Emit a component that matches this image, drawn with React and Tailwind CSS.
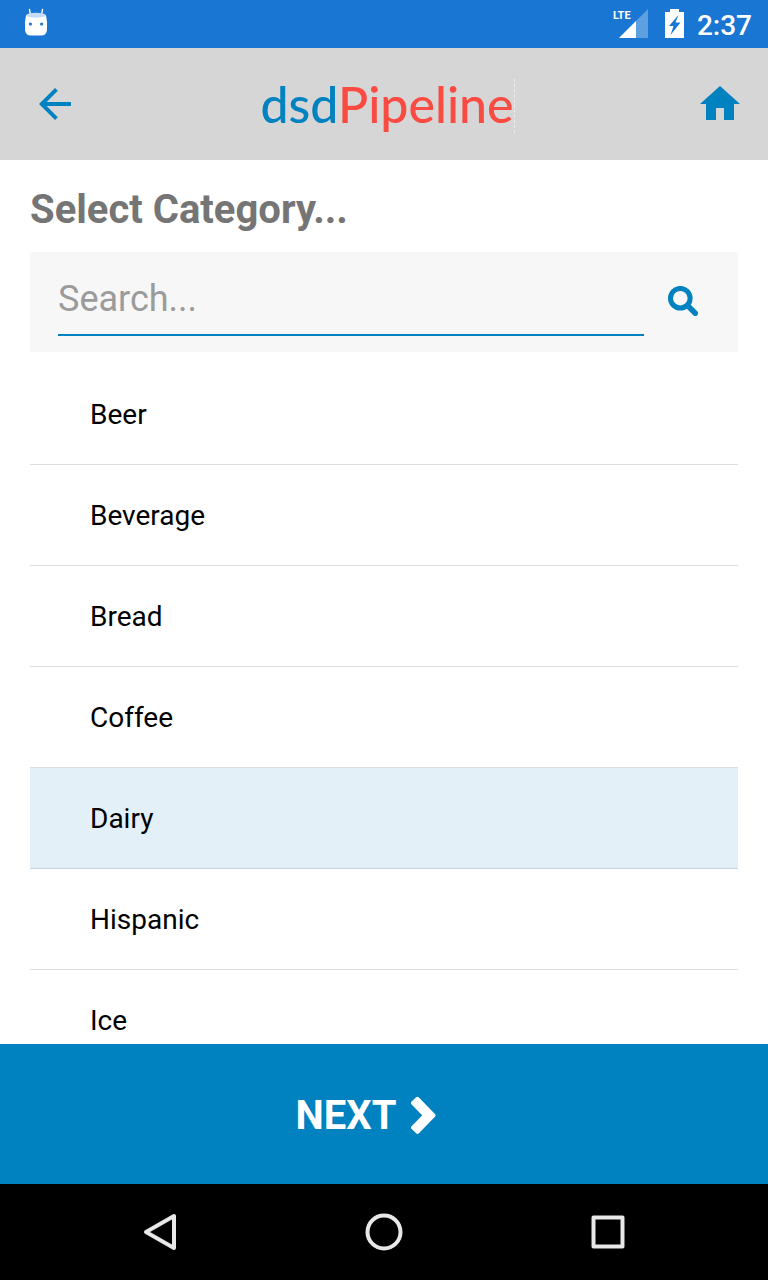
import React, { useState } from 'react';

const CATEGORIES = ['Beer', 'Beverage', 'Bread', 'Coffee', 'Dairy', 'Hispanic', 'Ice'];

function StatusBar() {
  return (
    <div className="flex h-12 shrink-0 items-center justify-between bg-[#1976d2] pl-6 pr-4 text-white">
      <svg width="24" height="32" viewBox="0 0 24 32" aria-hidden="true">
        <path d="M5.500 1.500 6.500 7M18.500 1.500 17.500 7" stroke="#fff" strokeWidth="1.400" strokeLinecap="round" />
        <path d="M2 7.500Q12 3.500 22 7.500Q23.600 14 23 22Q22.500 27.500 17 27.500H7Q1.500 27.500 1 22Q.4 14 2 7.500z" fill="#fff" />
        <ellipse cx="12" cy="7.200" rx="9.800" ry="2.500" fill="#c4dcf5" />
        <circle cx="6.400" cy="16" r="1.600" fill="#1976d2" />
        <circle cx="17.600" cy="16" r="1.600" fill="#1976d2" />
      </svg>
      <div className="flex items-center">
        <div className="mr-4 flex h-8 w-9 items-start">
          <span className="w-[18px] text-[11px] font-bold leading-4">LTE</span>
          <svg className="-ml-3 shrink-0" width="30" height="30" viewBox="0 0 30 30" aria-hidden="true">
            <path d="M29 1V30H0z" fill="#fff" fillOpacity=".3" />
            <path d="M17 13V30H0z" fill="#fff" />
          </svg>
        </div>
        <svg className="mr-3" width="20" height="30" viewBox="0 0 20 30" aria-hidden="true">
          <path d="M5 0H14V3H19V29H0V3H5z" fill="#fff" />
          <path d="M13.500 6 4 17H8.500L5.500 26 15.500 13.500H10.500z" fill="#1976d2" />
        </svg>
        <span className="pt-1 text-[28px] font-medium leading-8">2:37</span>
      </div>
    </div>
  );
}

function Header() {
  return (
    <header className="flex h-28 shrink-0 items-center justify-between bg-[#d6d6d6] pl-[31px] pr-6 text-[#0081c0]">
      <button type="button" aria-label="Back">
        <svg width="48" height="48" viewBox="0 0 24 24" fill="currentColor">
          <path d="M20 11H7.830l5.590-5.590L12 4l-8 8 8 8 1.410-1.410L7.830 13H20z" />
        </svg>
      </button>
      <div className="mt-1 border-r border-dashed border-[#eeeeee] pb-1 font-['Lato',sans-serif] text-[50px] font-medium leading-[50px]">
        dsd<span className="text-[#fa4b42]">Pipeline</span>
      </div>
      <button type="button" aria-label="Home">
        <svg width="48" height="48" viewBox="0 0 24 24" fill="currentColor">
          <path d="M10 20v-6h4v6h5v-8h3L12 3 2 12h3v8z" />
        </svg>
      </button>
    </header>
  );
}

function NavBar() {
  return (
    <nav className="grid h-24 shrink-0 grid-cols-3 place-items-center bg-black px-12 text-[#e8e8e8]">
      <button type="button" aria-label="System back">
        <svg width="48" height="48" viewBox="0 0 48 48" fill="none" stroke="currentColor" strokeWidth="4" strokeLinejoin="round">
          <path d="M10 24 38 8V40z" />
        </svg>
      </button>
      <button type="button" aria-label="System home">
        <svg width="48" height="48" viewBox="0 0 48 48" fill="none" stroke="currentColor" strokeWidth="4">
          <circle cx="24" cy="24" r="16.500" />
        </svg>
      </button>
      <button type="button" aria-label="Recent apps">
        <svg width="48" height="48" viewBox="0 0 48 48" fill="none" stroke="currentColor" strokeWidth="4" strokeLinejoin="round">
          <rect x="9.500" y="9.500" width="29" height="29" />
        </svg>
      </button>
    </nav>
  );
}

export default function App() {
  const [search, setSearch] = useState('');
  const [selected, setSelected] = useState('Dairy');
  const visible = CATEGORIES.filter(c => c.toLowerCase().includes(search.toLowerCase()));

  return (
    <div className="flex h-screen flex-col overflow-hidden bg-white font-['Roboto',sans-serif]">
      <StatusBar />
      <Header />

      <main className="flex min-h-0 flex-1 flex-col px-[30px]">
        <h1 className="pb-[18px] pt-[26px] text-[40px] font-bold leading-[48px] text-[#757575]">Select Category...</h1>

        <form onSubmit={e => e.preventDefault()} className="flex shrink-0 items-center gap-6 bg-[#f7f7f7] pb-4 pl-7 pr-10 pt-3">
          <input type="text" value={search} onChange={e => setSearch(e.target.value)}
            className="h-[72px] min-w-0 flex-1 border-b-2 border-[#0081c0] text-4xl text-black outline-none placeholder:text-[#9b9b9b]"
            placeholder="Search..." aria-label="Search categories" />
          <button type="submit" aria-label="Search" className="pt-0.5 text-[#0081c0]">
            <svg width="30" height="30" viewBox="0 0 30 30" fill="none" stroke="currentColor" strokeWidth="5">
              <circle cx="12.300" cy="12.200" r="9.800" />
              <path d="M20 20 27.300 27.300" strokeWidth="5.500" strokeLinecap="round" />
            </svg>
          </button>
        </form>

        <ul className="mt-3 min-h-0 flex-1 overflow-y-auto [scrollbar-width:none]">
          {visible.map(cat => (
            <li key={cat}>
              <button type="button" onClick={() => setSelected(cat)}
                className={`block w-full border-b px-[60px] pb-[29px] pt-[31px] text-left text-[28px] leading-10 text-black ${
                  selected === cat ? 'border-[#c9d4da] bg-[#e3f0f8]' : 'border-[#dedede]'
                }`}>{cat}</button>
            </li>
          ))}
        </ul>
      </main>

      <button type="button" className="flex h-[140px] shrink-0 items-center justify-center gap-[14px] bg-[#0081c0] pr-9 pt-1 text-[40px] font-bold text-white">
        NEXT
        <svg width="26" height="40" viewBox="0 0 26 40" fill="currentColor" stroke="currentColor" strokeWidth="4" strokeLinejoin="round" aria-hidden="true">
          <path d="M3 7 7.500 2.800 23.500 19.300 7.500 35.800 3 31.600 15 19.300z" />
        </svg>
      </button>
      <NavBar />
    </div>
  );
}
